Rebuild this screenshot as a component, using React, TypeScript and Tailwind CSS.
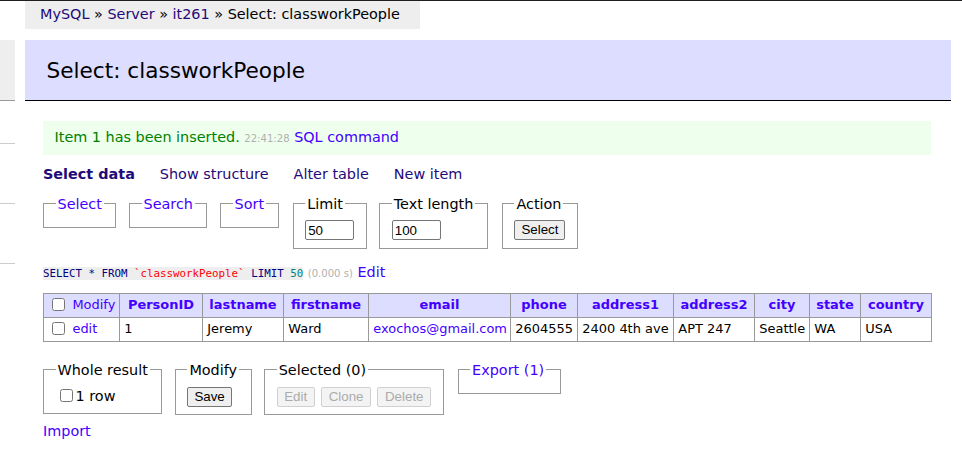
import React from "react";

const sans = "font-['DejaVu_Sans',Verdana,sans-serif]";
const link = "text-[#4400ff]";
const visited = "text-[#1f0a7a]";

function Box({
  legend,
  children,
  className = "",
}: {
  legend: React.ReactNode;
  children?: React.ReactNode;
  className?: string;
}) {
  return (
    <fieldset className={`border border-[#999] px-[11.5px] pt-[7.2px] pb-[7.2px] ${className}`}>
      <legend className="px-[2px] leading-[18px]">{legend}</legend>
      {children}
    </fieldset>
  );
}

function Btn({ children, disabled }: { children: React.ReactNode; disabled?: boolean }) {
  return (
    <button
      disabled={disabled}
      className={
        disabled
          ? "h-[20px] rounded-[2px] border border-[#d0d0d0] bg-[#f3f3f3] px-[6.5px] font-['Liberation_Sans',Arial,sans-serif] text-[13.33px] leading-[16px] text-[#ababab]"
          : "h-[20px] rounded-[2px] border border-[#767676] bg-[#efefef] px-[6px] font-['Liberation_Sans',Arial,sans-serif] text-[13.33px] leading-[16px] text-black"
      }
    >
      {children}
    </button>
  );
}

function NumInput({ value }: { value: string }) {
  return (
    <input
      defaultValue={value}
      className="h-[20px] w-[49px] rounded-[2px] border border-[#767676] bg-white px-[2px] font-['Liberation_Sans',Arial,sans-serif] text-[13.33px] text-black"
    />
  );
}

const columns = [
  { name: "PersonID", w: "w-[83px]" },
  { name: "lastname", w: "w-[81px]" },
  { name: "firstname", w: "w-[85px]" },
  { name: "email", w: "w-[142px]" },
  { name: "phone", w: "w-[67px]" },
  { name: "address1", w: "w-[96px]" },
  { name: "address2", w: "w-[81px]" },
  { name: "city", w: "w-[55px]" },
  { name: "state", w: "w-[51px]" },
  { name: "country", w: "w-[71px]" },
];

const cell = "whitespace-nowrap border border-[#999] px-[4.3px] py-0 align-middle";

export default function App() {
  return (
    <div className={`min-h-screen bg-white text-[14.4px] leading-[18px] text-black ${sans}`}>
      <div className="h-px bg-[#1f1f1f]" />
      <div className="flex">
        {/* edge of the side menu */}
        <div className="w-[15px] shrink-0">
          <div className="mt-[39px] h-[61px] border-b border-[#999] bg-[#eee]" />
          <div className="mt-[42px] h-px bg-[#ccc]" />
          <div className="mt-[59px] h-px bg-[#ccc]" />
          <div className="mt-[59px] h-px bg-[#ccc]" />
        </div>

        <div className="ml-[10px] w-[926px]">
          <div className="h-[28px] w-[395px] whitespace-nowrap bg-[#eee] pl-[15px] leading-[26px]">
            <a className={visited}>MySQL</a> » <a className={visited}>Server</a> »{" "}
            <a className={visited}>it261</a> » Select: classworkPeople
          </div>

          <h2 className="mt-[11px] border-b border-black bg-[#ddf] py-[16.5px] pl-[21.6px] text-[21.6px] leading-[27px] font-normal">
            Select: classworkPeople
          </h2>

          <div className="pl-[18px]">
            <div className="mt-[20px] mr-[20px] bg-[#efe] px-[11.5px] py-[7.2px] text-[#008000]">
              Item 1 has been inserted.{" "}
              <span className="text-[10.08px] text-[#b0b0b0]">22:41:28</span>{" "}
              <a className={link}>SQL command</a>
            </div>

            <div className="mt-[9.6px] flex gap-[25px]">
              <a className={`font-bold ${visited}`}>Select data</a>
              <a className={visited}>Show structure</a>
              <a className={visited}>Alter table</a>
              <a className={visited}>New item</a>
            </div>

            <div className="mt-[12px] flex items-start gap-[12.6px]">
              <Box legend={<a className={link}>Select</a>} />
              <Box legend={<a className={link}>Search</a>} />
              <Box legend={<a className={link}>Sort</a>} />
              <Box legend="Limit" className="ml-[1.5px]">
                <div className="h-[21px]">
                  <NumInput value="50" />
                </div>
              </Box>
              <Box legend="Text length">
                <div className="h-[21px]">
                  <NumInput value="100" />
                </div>
              </Box>
              <Box legend="Action" className="ml-[1.5px]">
                <div className="h-[21px]">
                  <Btn>Select</Btn>
                </div>
              </Box>
            </div>

            <p className="mt-[13.4px] whitespace-nowrap">
              <code className="bg-[#eee] font-['DejaVu_Sans_Mono',monospace] text-[10.8px]">
                <span className="text-[#000080]">SELECT</span>{" "}
                <span className="text-[#000080]">*</span>{" "}
                <span className="text-[#000080]">FROM</span>{" "}
                <span className="text-[#ff0000]">`classworkPeople`</span>{" "}
                <span className="text-[#000080]">LIMIT</span>{" "}
                <span className="text-[#008080]">50</span>
              </code>{" "}
              <span className="text-[10.08px] text-[#b0b0b0]">(0.000 s)</span>{" "}
              <a className={link}>Edit</a>
            </p>

            <table className="mt-[10px] w-[888px] table-fixed border-collapse text-[12.96px] leading-[16.2px]">
              <colgroup>
                <col className="w-[76px]" />
                {columns.map((c) => (
                  <col key={c.name} className={c.w} />
                ))}
              </colgroup>
              <thead>
                <tr className="h-[24px] bg-[#ddf]">
                  <td className={cell}>
                    <input type="checkbox" className="m-0 mr-[3px] ml-[4px] align-[-2px]" />{" "}
                    <a className={link}>Modify</a>
                  </td>
                  {columns.map((c) => (
                    <th key={c.name} className={`${cell} text-center font-bold ${link}`}>
                      {c.name}
                    </th>
                  ))}
                </tr>
              </thead>
              <tbody>
                <tr className="h-[24px]">
                  <td className={cell}>
                    <input type="checkbox" className="m-0 mr-[3px] ml-[4px] align-[-2px]" />{" "}
                    <a className={link}>edit</a>
                  </td>
                  <td className={cell}>1</td>
                  <td className={cell}>Jeremy</td>
                  <td className={cell}>Ward</td>
                  <td className={cell}>
                    <a className={link}>exochos@gmail.com</a>
                  </td>
                  <td className={cell}>2604555</td>
                  <td className={cell}>2400 4th ave</td>
                  <td className={cell}>APT 247</td>
                  <td className={cell}>Seattle</td>
                  <td className={cell}>WA</td>
                  <td className={cell}>USA</td>
                </tr>
              </tbody>
            </table>

            <div className="mt-[19px] flex items-start gap-[12.6px]">
              <Box legend="Whole result">
                <label className="flex h-[19.6px] items-center">
                  <input type="checkbox" className="m-0 mr-[3px] ml-[4px]" />1 row
                </label>
              </Box>
              <Box legend="Modify">
                <div className="h-[21.2px] pt-[1px]">
                  <Btn>Save</Btn>
                </div>
              </Box>
              <Box legend="Selected (0)">
                <div className="flex h-[21.2px] gap-[6.5px] pt-[1px]">
                  <Btn disabled>Edit</Btn>
                  <Btn disabled>Clone</Btn>
                  <Btn disabled>Delete</Btn>
                </div>
              </Box>
              <Box legend={<a className={link}>Export (1)</a>} className="ml-[1.5px] pr-[14px]" />
            </div>

            <p className="mt-[7px]">
              <a className={link}>Import</a>
            </p>
          </div>
        </div>
      </div>
    </div>
  );
}
